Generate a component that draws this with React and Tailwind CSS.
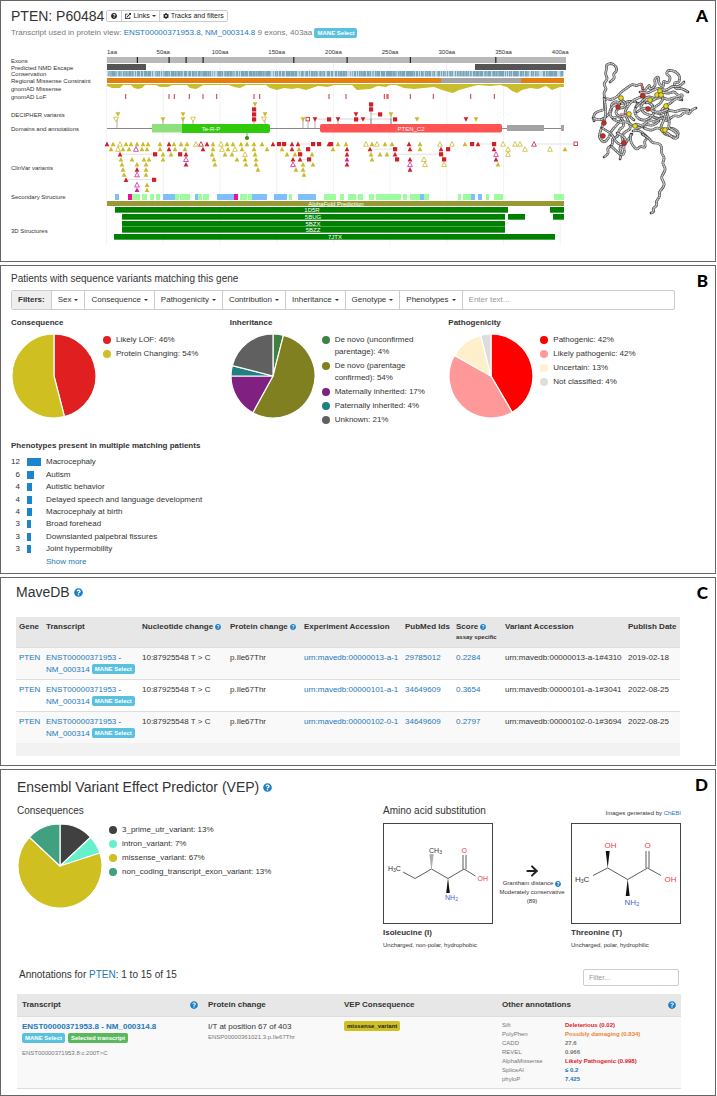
import React from 'react';
import { FaQuestionCircle, FaExternalLinkAlt, FaCog } from 'react-icons/fa';
import { ArrowRight } from 'lucide-react';

const COLORS = {
  y: '#c8bb2c',
  r: '#cf1f2b',
  m: '#cc22aa',
};

/* ---------- data ---------- */

const axis = [50, 100, 150, 200, 250, 300, 350, 400];
const aaX = (aa) => 106.6 + aa * 1.134;

const trackLabels = [
  ['Exons', 63],
  ['Predicted NMD Escape', 70],
  ['Conservation', 76],
  ['Regional Missense Constraint', 83],
  ['gnomAD Missense', 91],
  ['gnomAD LoF', 99],
  ['DECIPHER variants', 117],
  ['Domains and annotations', 131],
  ['ClinVar variants', 170],
  ['Secondary Structure', 199],
  ['3D Structures', 233],
];

const exonEdges = [137.3, 169, 186, 203, 293.7, 347, 410.3, 495.7];
const lof = [125.7, 169, 174.3, 189.3, 203, 216.7, 254, 259.7, 329, 346, 384.3, 387, 388, 410.3, 433.3, 470.7, 494.3];

const missense = [
  [107, 1], [112, 3], [120, 3], [123, 0], [131, 0], [134, 3], [138, 4], [142, 3], [145, 0], [156, 0], [160, 2], [168, 2],
  [172, 0], [187, 0], [190, 3], [196, 4], [200, 2], [203, 0], [229, 0], [234, 2], [240, 3], [246, 0], [266, 0],
  [270, 3], [277, 5], [284, 3], [292, 4], [298, 3], [306, 5], [312, 3], [318, 1], [328, 2], [334, 0], [352, 0],
  [357, 5], [370, 4], [378, 1], [386, 2], [390, 0], [396, 0], [404, 3], [414, 4], [424, 3], [434, 2], [442, 5],
  [449, 7], [453, 8], [459, 5], [470, 2], [478, 0], [490, 1], [500, 0], [507, 2], [512, 6], [517, 8], [522, 5],
  [530, 3], [538, 4], [546, 1], [552, 5], [560, 2], [564, 2],
];

// lower case = filled triangle, upper case = open triangle, s/S = square
const clinvar = [
  'r107 y113 Y120 y126 y131 y137 y143 y148 y160 r169 y174 y181 y187 Y196 R201 r207 y213 Y221 y227 y233 y241 y247 y254 y262 r273 s279 s284 r292 r298 s313 s319 r329 s331 y338 y346 Y366 y372 Y377 y385 y392 r409 y420 Y440 Y452 y465 s472 r478 s494 Y503 Y515 Y520 R534 S576',
  'y111 Y118 y123 y129 M136 y142 y147 y160 r169 y175 y185 r203 y213 Y222 y228 Y235 y242 y254 y267 y282 r292 y299 s308 y333 r347 r370 s395 r410 y420 r441 s448 r494 Y508 Y525 Y550 y565',
  'r120 s155 y163 y171 s180 r186 y212 y225 y232 Y245 y255 y287 y295 s300 y312 r347 y371 y380 y387 r395 s441 M496 Y508',
  'y121 y132 y144 y149 y163 M186 y214 y237 y245 y256 r293 r300 s309 m347 y372 s397 r410 Y424 s444 r496',
  'y122 y137 y146 r186 y215 y246 y256 M293 y303 y313 r347 M410 Y425 Y444 y498',
  'y123 r137 y146 y258 y296 y303 r410',
  'y124 M137 y146 y304',
  'r126 s154',
  'M137 y147',
  'm137 y147',
];
const clinvarLinks = [
  [0, 298, 313], [0, 478, 494], [0, 534, 576], [1, 370, 395],
  [2, 120, 155], [2, 395, 441], [3, 300, 309], [7, 126, 154],
];

const decipher = [
  'y255 s371',
  's254 s371',
  'y118 y183 s254 y265 r356 s380 y391',
  'Y116 y163 y183 Y193 s254 Y264 y303 S308 r315 s329 r338 s356 r363 s395 y417 r466 y476',
];
const stems = [117, 163, 183, 193, 254, 265, 303, 308, 315, 338, 371, 391];

const secondary = {
  '#80bfff': [[115, 119], [163, 175], [195, 198], [217, 234], [252, 267], [274, 287], [298, 316], [420, 424], [471, 475], [478, 482]],
  '#e6149b': [[128, 132], [234, 238]],
  '#9dfba0': [
    [132, 140], [142, 147], [150, 154], [156, 160], [175, 179], [180, 190], [198, 202], [203, 209], [240, 247],
    [248, 252], [289, 292], [324, 336], [340, 344], [348, 356], [358, 363], [369, 374], [376, 401], [403, 407],
    [410, 420], [424, 429], [458, 461], [463, 471], [486, 489], [494, 503], [554, 564],
  ],
};

const structures = [
  { name: '1D5R', y: 207, label: 312, bars: [[115, 508], [550, 564]] },
  { name: '5BUG', y: 214, label: 313, bars: [[122, 505], [508, 525], [553, 564]] },
  { name: '5BZX', y: 221, label: 313, bars: [[122, 505]] },
  { name: '5BZZ', y: 227, label: 313, bars: [[122, 505]] },
  { name: '7JTX', y: 234, label: 335, bars: [[114, 555]] },
];

// backbone of the folded protein, one list of points for each strand
const strands = [
  [[605, 98], [603, 93], [607, 89], [603, 84], [608, 79], [605, 74], [607, 68], [606, 65], [611, 63], [616, 66], [617, 71], [613, 74], [615, 78], [610, 82]],
  [[594, 121], [593, 115], [598, 111], [605, 110], [604, 103], [606, 98], [611, 100], [617, 97], [621, 92], [627, 88], [632, 84], [637, 86], [641, 83], [643, 89]],
  [[593, 118], [599, 121], [606, 117], [612, 111], [611, 104], [616, 101], [622, 104], [629, 101], [636, 102]],
  [[604, 98], [607, 112], [603, 124], [600, 132], [599, 138], [604, 143], [609, 138], [611, 131], [616, 126], [621, 120]],
  [[604, 157], [609, 154], [607, 148], [613, 145], [612, 138], [618, 137], [619, 129], [624, 127], [623, 119], [618, 116], [612, 119], [609, 112], [613, 105], [620, 104]],
  [[620, 159], [622, 153], [619, 148], [624, 143], [621, 136], [626, 131], [631, 129], [629, 122], [624, 113], [628, 106], [633, 100], [641, 97]],
  [[611, 146], [616, 151], [622, 156], [625, 152], [623, 146], [628, 140], [632, 134]],
  [[602, 128], [607, 131], [612, 134], [615, 141], [620, 145], [627, 144], [625, 137], [617, 133]],
  [[613, 119], [619, 123], [626, 121], [633, 126], [640, 128], [646, 124], [653, 126], [659, 121]],
  [[638, 103], [634, 109], [636, 117], [643, 121], [651, 118], [655, 111], [652, 104], [645, 101], [640, 106], [643, 113], [650, 115], [657, 119], [664, 117]],
  [[641, 96], [646, 89], [650, 84], [649, 90], [656, 86], [654, 79], [659, 76], [658, 83], [664, 88], [663, 80], [668, 84], [671, 77], [666, 74], [668, 70], [675, 71], [680, 76], [679, 83], [674, 82], [675, 89], [681, 88], [688, 92]],
  [[640, 92], [647, 94], [653, 90], [659, 88], [666, 91], [672, 86], [679, 87], [684, 82]],
  [[636, 107], [642, 101], [648, 96], [655, 99], [662, 97], [668, 100], [675, 97], [682, 100]],
  [[662, 92], [669, 94], [674, 91], [678, 96], [683, 94], [681, 100], [676, 98], [671, 103], [665, 106], [660, 112], [662, 119], [668, 121]],
  [[696, 108], [691, 110], [690, 114], [684, 112], [680, 117], [674, 115], [669, 120], [662, 117], [656, 122], [648, 120], [643, 126], [636, 124]],
  [[689, 110], [682, 109], [676, 112], [669, 110], [663, 113], [656, 114], [650, 108], [643, 108], [637, 112]],
  [[667, 108], [664, 121], [660, 127], [664, 134], [671, 136], [677, 138], [679, 132], [673, 128], [666, 129]],
  [[667, 113], [670, 121], [668, 128], [675, 131], [679, 137], [674, 139], [669, 134], [663, 131], [657, 127], [652, 131], [644, 128]],
  [[631, 134], [630, 140], [633, 146], [637, 150], [640, 146], [646, 148], [644, 141], [648, 138], [643, 133], [638, 130], [633, 131]],
  [[646, 103], [654, 101], [658, 95], [664, 97], [661, 103], [655, 107], [649, 110], [659, 113], [668, 109]],
  [[620, 99], [627, 103], [624, 108], [618, 108], [615, 113], [620, 117], [628, 115], [634, 120]],
  [[642, 134], [649, 138], [652, 143], [659, 143], [662, 147], [661, 153], [665, 158], [662, 163], [666, 169], [663, 174], [661, 178], [665, 184], [662, 189], [659, 192], [660, 197], [656, 201], [657, 206], [653, 208], [654, 212], [651, 213]],
];
const spheres = {
  '#e6dc1e': [[621, 98], [629, 114], [650, 100], [660, 91], [657, 95], [661, 95], [666, 106], [635, 126], [663, 130], [665, 130]],
  '#d8222c': [[643, 96], [618, 107], [648, 109], [604, 123], [603, 136], [624, 143]],
};

const phenotypes = [
  ['Macrocephaly', 12],
  ['Autism', 6],
  ['Autistic behavior', 4],
  ['Delayed speech and language development', 4],
  ['Macrocephaly at birth', 4],
  ['Broad forehead', 3],
  ['Downslanted palpebral fissures', 3],
  ['Joint hypermobility', 3],
];

const patientCharts = [
  {
    title: 'Consequence',
    slices: [
      { label: 'Likely LOF', value: 46, color: '#e02020' },
      { label: 'Protein Changing', value: 54, color: '#cfbf20' },
    ],
  },
  {
    title: 'Inheritance',
    slices: [
      { label: 'De novo (unconfirmed parentage)', value: 4, color: '#408040' },
      { label: 'De novo (parentage confirmed)', value: 54, color: '#808020' },
      { label: 'Maternally inherited', value: 17, color: '#802080' },
      { label: 'Paternally inherited', value: 4, color: '#208080' },
      { label: 'Unknown', value: 21, color: '#606060' },
    ],
  },
  {
    title: 'Pathogenicity',
    slices: [
      { label: 'Pathogenic', value: 42, color: '#ff0000' },
      { label: 'Likely pathogenic', value: 42, color: '#ff9999' },
      { label: 'Uncertain', value: 13, color: '#fff0cc' },
      { label: 'Not classified', value: 4, color: '#dddddd' },
    ],
  },
];

const vepSlices = [
  { label: '3_prime_utr_variant', value: 13, color: '#404040' },
  { label: 'intron_variant', value: 7, color: '#66f0cc' },
  { label: 'missense_variant', value: 67, color: '#cfbf20' },
  { label: 'non_coding_transcript_exon_variant', value: 13, color: '#40a080' },
];

const maveRows = [
  { urn: 'urn:mavedb:00000013-a-1', pubmed: '29785012', score: '0.2284', variant: 'urn:mavedb:00000013-a-1#4310', date: '2019-02-18' },
  { urn: 'urn:mavedb:00000101-a-1', pubmed: '34649609', score: '0.3654', variant: 'urn:mavedb:00000101-a-1#3041', date: '2022-08-25' },
  { urn: 'urn:mavedb:00000102-0-1', pubmed: '34649609', score: '0.2797', variant: 'urn:mavedb:00000102-0-1#3694', date: '2022-08-25' },
];

const annotations = [
  ['Sift', 'Deleterious (0.02)', 'text-[#e0202a]'],
  ['PolyPhen', 'Possibly damaging (0.834)', 'text-[#ee8434]'],
  ['CADD', '27.6', 'text-[#777]'],
  ['REVEL', '0.966', 'text-[#777]'],
  ['AlphaMissense', 'Likely Pathogenic (0.998)', 'text-[#e0202a]'],
  ['SpliceAI', '≤ 0.2', 'text-[#2478b8]'],
  ['phyloP', '7.425', 'text-[#2478b8]'],
];

/* ---------- small pieces ---------- */

function Panel({ letter, className, children }) {
  return (
    <section className={`relative border border-[#666] bg-white ${className}`}>
      <span className="absolute top-1.5 right-[7px] font-[Lato] text-[17px] leading-none font-black text-black">{letter}</span>
      {children}
    </section>
  );
}

function A({ children }) {
  return <a href="#" className="text-[#2478b8]">{children}</a>;
}

function Badge({ className = 'bg-[#5bc0de] text-white', children }) {
  return (
    <span className={`inline-block rounded-xs px-[3px] align-middle text-[6px] leading-[10px] font-bold ${className}`}>
      {children}
    </span>
  );
}

function Help({ className = 'size-[9px]' }) {
  return <FaQuestionCircle className={`inline-block shrink-0 text-[#1a7fc6] ${className}`} />;
}

function Caret() {
  return <span className="border-x-2 border-t-2 border-x-transparent border-t-[#333]" />;
}

function Pie({ slices }) {
  const total = slices.reduce((sum, s) => sum + s.value, 0);
  const point = (t) => {
    const a = (t / total) * 2 * Math.PI;
    return `${43 + 42 * Math.sin(a)} ${43 - 42 * Math.cos(a)}`;
  };
  let start = 0;
  return (
    <svg viewBox="0 0 86 86" className="size-[86px] shrink-0">
      {slices.map((s) => {
        const from = start;
        start += s.value;
        return (
          <path
            key={s.label}
            d={`M43 43L${point(from)}A42 42 0 ${s.value > total / 2 ? 1 : 0} 1 ${point(start)}Z`}
            fill={s.color}
            stroke="#fff"
            strokeWidth="1.2"
          />
        );
      })}
    </svg>
  );
}

function PieWithLegend({ slices }) {
  return (
    <div className="flex gap-1.5">
      <Pie slices={slices} />
      <ul className="flex flex-col gap-0.5 pt-px leading-3">
        {slices.map((s) => (
          <li key={s.label} className="flex gap-[5px]">
            <span className="mt-0.5 size-2 shrink-0 rounded-full" style={{ backgroundColor: s.color }} />
            <span>{`${s.label}: ${s.value}%`}</span>
          </li>
        ))}
      </ul>
    </div>
  );
}

/* ---------- protein tracks ---------- */

function Mark({ code, y, down }) {
  const kind = code[0];
  const x = Number(code.slice(1));
  const open = kind === kind.toUpperCase();
  const color = COLORS[kind.toLowerCase()] || COLORS.r;
  const style = open ? { fill: '#fff', stroke: color, strokeWidth: 0.8 } : { fill: color };
  if (kind === 's' || kind === 'S') {
    return <rect x={x - 2} y={y - 2} width={open ? 3.6 : 4.2} height={open ? 3.6 : 4.2} {...style} />;
  }
  return down
    ? <path d={`M${x - 2.4} ${y - 2.1}h4.8l-2.4 4.6z`} {...style} />
    : <path d={`M${x - 2.4} ${y + 2.2}h4.8l-2.4 -4.6z`} {...style} />;
}

function Conservation() {
  const bars = [];
  let seed = 7;
  for (let x = 107; x < 564; x += 1) {
    seed = (seed * 1103 + 377) % 9973;
    const level = seed % 10;
    bars.push(
      <rect key={x} x={x} y="71" width="1" height="5.5" fill={level > 7 ? '#c4d9e3' : level > 4 ? '#91b7c9' : '#76a5bc'} />
    );
  }
  return <g>{bars}</g>;
}

function ProteinTracks() {
  const area = `M107 84L${missense.map(([x, d]) => `${x} ${85 + d}`).join('L')}L564 84Z`;
  return (
    <svg viewBox="1 38 583 223" className="block w-full text-[6px]">
      <g stroke="#eee" strokeWidth="0.7">
        {[0, ...axis].map((aa) => <path key={aa} d={`M${aaX(aa)} 56V245`} />)}
      </g>
      <g fill="#333">
        {trackLabels.map(([label, y]) => <text key={label} x="11" y={y}>{label}</text>)}
        <text x="107" y="54">1aa</text>
        {axis.map((aa) => <text key={aa} x={aaX(aa)} y="54" textAnchor="middle">{`${aa}aa`}</text>)}
      </g>

      <rect x="107" y="57" width="459" height="6" fill="#b9b9b9" />
      {exonEdges.map((x) => <rect key={x} x={x - 0.5} y="57" width="1.2" height="6" fill="#222" />)}
      <rect x="107" y="64" width="39" height="6" fill="#555" />
      <rect x="475" y="64" width="91" height="6" fill="#555" />
      <Conservation />
      <rect x="107" y="78" width="457" height="5" fill="#e67e0e" />
      <rect x="441" y="78" width="80" height="5" fill="#a3a3a3" />
      <path d={area} fill="#c9bd2e" />
      {lof.map((x) => <rect key={x} x={x - 0.5} y="94" width="1" height="5" fill="#cf3038" />)}

      <g stroke="#777" strokeWidth="0.6">
        <path d="M315 119H329M338 119H356M356 119H395M371 114H380" stroke="#bbb" />
        {stems.map((x) => <path key={x} d={`M${x} 119V128`} />)}
        <path d="M371 106V125M391 115V125" />
      </g>
      {decipher.map((row, i) => row.split(' ').map((code) => <Mark key={code} code={code} y={104.3 + i * 5} down />))}

      <path d="M107 128.5H564" stroke="#888" />
      <rect x="152" y="124" width="31" height="8.5" fill="#8fe07a" />
      <path d="M182 124h86q2 0 2 2v5q0 2 -2 2h-86z" fill="#2fcb0a" />
      <rect x="320" y="124" width="182" height="8.5" rx="2" fill="#ff5353" />
      <rect x="507" y="125" width="37" height="6" fill="#a3a3a3" />
      <rect x="561" y="125" width="3" height="6" fill="#a3a3a3" />
      <g fill="#fff" textAnchor="middle">
        <text x="211" y="130.5">Te-R-P</text>
        <text x="411" y="130.5">PTEN_C2</text>
      </g>
      <path d="M247 133V137" stroke="#3b8f1c" strokeWidth="0.7" />
      <circle cx="247" cy="138" r="2.1" fill="#3b8f1c" />

      {clinvarLinks.map(([row, a, b]) => (
        <path key={`${row}-${a}`} d={`M${a} ${144 + row * 5.1}H${b}`} stroke="#ccc" strokeWidth="0.6" />
      ))}
      {clinvar.map((row, i) => row.split(' ').map((code) => <Mark key={i + code} code={code} y={144 + i * 5.1} />))}

      {Object.entries(secondary).map(([color, segments]) =>
        segments.map(([a, b]) => <rect key={a} x={a} y="194" width={b - a} height="6" fill={color} />)
      )}
      <rect x="107" y="201" width="457" height="5" fill="#999933" />
      {structures.map((s) => s.bars.map(([a, b]) => (
        <rect key={s.name + a} x={a} y={s.y} width={b - a} height="5.7" fill="#008000" />
      )))}
      <g fill="#fff" textAnchor="middle">
        <text x="336" y="205.8">AlphaFold Prediction</text>
        {structures.map((s) => <text key={s.name} x={s.label} y={s.y + 5}>{s.name}</text>)}
      </g>
    </svg>
  );
}

function smooth(points) {
  let d = `M${points[0].join(' ')}`;
  for (let i = 1; i < points.length - 1; i += 1) {
    const [x, y] = points[i];
    const [nx, ny] = points[i + 1];
    d += `Q${x} ${y} ${(x + nx) / 2} ${(y + ny) / 2}`;
  }
  return `${d}L${points[points.length - 1].join(' ')}`;
}

function ProteinModel() {
  return (
    <svg viewBox="584 38 131 223" className="block w-full" fill="none" strokeLinejoin="round">
      {strands.map((points, i) => (
        <g key={i}>
          <path d={smooth(points)} stroke="#3a3a3a" strokeWidth="2.6" strokeLinecap="round" />
          <path d={smooth(points)} stroke="#d2d2d2" strokeWidth="1.4" />
          <path d={smooth(points)} stroke="#777" strokeWidth="1.4" strokeDasharray="0.6 1.8" />
        </g>
      ))}
      <path d="M642 83V92M620 114H627" stroke="#c8323a" strokeWidth="1" />
      {Object.entries(spheres).map(([color, list]) =>
        list.map(([x, y]) => <circle key={`${x}-${y}`} cx={x} cy={y} r="2.4" fill={color} stroke="#4a3a10" strokeWidth="0.6" />)
      )}
    </svg>
  );
}

/* ---------- molecules ---------- */

function Isoleucine() {
  return (
    <svg viewBox="384 824 108 99" className="block w-full text-[7px]">
      <g stroke="#333" strokeWidth="0.8" fill="none">
        <path d="M403 872L415 878.5L431.5 869L448 878.5L464 869L475.5 876" />
        <path d="M463 869V855M466 869V855" />
        <path d="M429.5 855h4M429.7 857h3.6M430 859h3M430.2 861h2.6M430.5 863h2M430.7 865h1.6M431 867h1" />
      </g>
      <path d="M448 878L446.2 893H449.8Z" fill="#111" />
      <g fill="#333">
        <text x="429" y="853">CH<tspan fontSize="5" dy="1">3</tspan></text>
        <text x="388" y="871">H<tspan fontSize="5" dy="1">3</tspan><tspan dy="-1">C</tspan></text>
      </g>
      <g fill="#e8404a">
        <text x="461.5" y="853">O</text>
        <text x="477.5" y="881">OH</text>
      </g>
      <text x="445" y="900" fill="#4a5fd8">NH<tspan fontSize="5" dy="1">2</tspan></text>
    </svg>
  );
}

function Threonine() {
  return (
    <svg viewBox="573 824 108 99" className="block w-full text-[8px]">
      <g stroke="#333" strokeWidth="0.8" fill="none">
        <path d="M594 875.5L608.7 868L628.7 879.5L648.5 868L662 875.5" />
        <path d="M647 868V851M650 868V851" />
      </g>
      <path d="M608.7 868L606.7 851H610.7ZM628.7 879L626.7 896H630.7Z" fill="#111" />
      <text x="576" y="882" fill="#333">H<tspan fontSize="5" dy="1">3</tspan><tspan dy="-1">C</tspan></text>
      <g fill="#e8404a">
        <text x="605.5" y="848">OH</text>
        <text x="645.5" y="848">O</text>
        <text x="665.5" y="882">OH</text>
      </g>
      <text x="625.5" y="905" fill="#4a5fd8">NH<tspan fontSize="6" dy="1">2</tspan></text>
    </svg>
  );
}

function AminoAcid({ name, note, children }) {
  return (
    <figure className="w-[110px]">
      <div className="border border-[#444]">{children}</div>
      <figcaption className="pt-[3px]">
        <b className="block leading-3">{name}</b>
        <span className="mt-0.5 block text-[6px] leading-2 whitespace-nowrap">{note}</span>
      </figcaption>
    </figure>
  );
}

/* ---------- panels ---------- */

function ProteinPanel() {
  return (
    <Panel letter="A" className="pt-2">
      <div className="flex items-center gap-0.5 pl-2.5">
        <h1 className="text-sm leading-[14px]">PTEN: P60484</h1>
        <div className="flex h-3 divide-x divide-[#ccc] rounded-xs border border-[#ccc] text-[7px] leading-[10px] text-[#222]">
          <button type="button" aria-label="Help" className="px-1"><FaQuestionCircle className="size-1.5" /></button>
          <button type="button" className="flex items-center gap-0.5 px-[3px]">
            <FaExternalLinkAlt className="size-1.5" />Links<Caret />
          </button>
          <button type="button" className="flex items-center gap-0.5 px-[3px]">
            <FaCog className="size-1.5" />Tracks and filters
          </button>
        </div>
      </div>
      <p className="mt-[5px] pl-2.5 leading-[10px] text-[#777]">
        Transcript used in protein view: <A>ENST00000371953.8, NM_000314.8</A> 9 exons, 403aa{' '}
        <span className="inline-flex align-top"><Badge>MANE Select</Badge></span>
      </p>
      <div className="grid grid-cols-[583fr_131fr]">
        <ProteinTracks />
        <ProteinModel />
      </div>
    </Panel>
  );
}

const filters = ['Sex', 'Consequence', 'Pathogenicity', 'Contribution', 'Inheritance', 'Genotype', 'Phenotypes'];

function PatientsPanel() {
  return (
    <Panel letter="B" className="pt-[7px] pr-10 pb-[5px] pl-2.5">
      <h2 className="text-[10px] leading-3">Patients with sequence variants matching this gene</h2>
      <div className="mt-[5px] flex h-5 divide-x divide-[#ccc] rounded-xs border border-[#ccc]">
        <b className="bg-[#eee] px-1.5 leading-[18px]">Filters:</b>
        {filters.map((f) => (
          <button key={f} type="button" className="flex items-center gap-[3px] px-1.5">{f}<Caret /></button>
        ))}
        <input aria-label="Filter text" placeholder="Enter text..." className="min-w-0 flex-1 px-1.5 placeholder:text-[#999]" />
      </div>

      <div className="mt-[7px] grid grid-cols-3 pr-2">
        {patientCharts.map((c) => (
          <div key={c.title} className="pr-3">
            <h3 className="mb-1 leading-3 font-bold">{c.title}</h3>
            <PieWithLegend slices={c.slices} />
          </div>
        ))}
      </div>

      <h3 className="mt-3.5 leading-3 font-bold">Phenotypes present in multiple matching patients</h3>
      <ul className="mt-1 grid h-[112px] auto-rows-fr">
        {phenotypes.map(([name, count]) => (
          <li key={name} className="flex items-center">
            <span className="w-[9px] text-right">{count}</span>
            <span className="ml-[7px] w-[19px]">
              <span className="block h-2 bg-[#1a85cc]" style={{ width: count * 1.2 }} />
            </span>
            {name}
          </li>
        ))}
        <li className="flex items-center pl-[35px]"><A>Show more</A></li>
      </ul>
    </Panel>
  );
}

function MavePanel() {
  return (
    <Panel letter="C" className="pt-1.5 pr-[35px] pb-[9px] pl-[15px]">
      <h2 className="flex items-center gap-1 text-sm leading-4">MaveDB <Help /></h2>
      <table className="mt-[17px] w-full table-fixed text-left whitespace-nowrap">
        <colgroup>
          <col className="w-[27px]" />
          <col className="w-[96px]" />
          <col className="w-[88px]" />
          <col className="w-[74px]" />
          <col className="w-[101px]" />
          <col className="w-[51px]" />
          <col className="w-[49px]" />
          <col className="w-[123px]" />
          <col className="w-[55px]" />
        </colgroup>
        <thead className="bg-[#e7e7e7]">
          <tr className="h-[30px] align-top leading-3 *:px-[3px] *:pt-1">
            <th>Gene</th>
            <th>Transcript</th>
            <th>Nucleotide change <Help className="size-1.5" /></th>
            <th>Protein change <Help className="size-1.5" /></th>
            <th>Experiment Accession</th>
            <th>PubMed Ids</th>
            <th>
              Score <Help className="size-1.5" />
              <small className="block text-[6px] leading-2">assay specific</small>
            </th>
            <th>Variant Accession</th>
            <th>Publish Date</th>
          </tr>
        </thead>
        <tbody>
          {maveRows.map((r) => (
            <tr key={r.urn} className="h-8 border-t border-[#ddd] align-top leading-3 odd:bg-[#f9f9f9] *:px-[3px] *:pt-1">
              <td><A>PTEN</A></td>
              <td>
                <A>ENST00000371953</A> -<br />
                <A>NM_000314</A> <Badge>MANE Select</Badge>
              </td>
              <td>10:87925548 T &gt; C</td>
              <td>p.Ile67Thr</td>
              <td><A>{r.urn}</A></td>
              <td><A>{r.pubmed}</A></td>
              <td><A>{r.score}</A></td>
              <td>{r.variant}</td>
              <td>{r.date}</td>
            </tr>
          ))}
        </tbody>
        <tfoot>
          <tr className="h-[13px] bg-[#f2f2f2]"><td colSpan={9} /></tr>
        </tfoot>
      </table>
    </Panel>
  );
}

function VepPanel() {
  return (
    <Panel letter="D" className="pt-[9px] pr-[34px] pb-1.5 pl-4">
      <h2 className="flex items-center gap-1 text-sm leading-4">Ensembl Variant Effect Predictor (VEP) <Help /></h2>

      <div className="mt-2.5 grid grid-cols-[366fr_298fr]">
        <div>
          <h3 className="mb-1.5 text-[10px] leading-3">Consequences</h3>
          <PieWithLegend slices={vepSlices} />
        </div>
        <div>
          <div className="mb-1.5 flex items-end justify-between leading-3">
            <h3 className="text-[10px]">Amino acid substitution</h3>
            <span className="text-[6px] leading-2">Images generated by <A>ChEBI</A></span>
          </div>
          <div className="flex justify-between">
            <AminoAcid name="Isoleucine (I)" note="Uncharged, non-polar, hydrophobic"><Isoleucine /></AminoAcid>
            <div className="flex flex-col items-center pt-10 text-center text-[6px] leading-[9px] whitespace-nowrap">
              <ArrowRight className="size-4 text-[#222]" strokeWidth={3} />
              <span className="flex items-center gap-0.5">Grantham distance <Help className="size-1.5" /></span>
              <span>Moderately conservative</span>
              <span>(89)</span>
            </div>
            <AminoAcid name="Threonine (T)" note="Uncharged, polar, hydrophilic"><Threonine /></AminoAcid>
          </div>
        </div>
      </div>

      <div className="mt-5 flex items-start justify-between px-0.5">
        <h3 className="text-[10px] leading-3">Annotations for <A>PTEN</A>: 1 to 15 of 15</h3>
        <input
          aria-label="Filter annotations"
          placeholder="Filter..."
          className="h-[17px] w-24 rounded-xs border border-[#ccc] px-[5px] text-[7px] placeholder:text-[#999]"
        />
      </div>

      <table className="mt-2 w-full table-fixed text-left">
        <colgroup>
          <col className="w-[186px]" />
          <col className="w-[136px]" />
          <col className="w-[158px]" />
          <col className="w-[184px]" />
        </colgroup>
        <thead className="bg-[#e7e7e7]">
          <tr className="h-[22px] *:px-[5px]">
            <th><span className="flex items-center justify-between">Transcript <Help className="size-2" /></span></th>
            <th>Protein change</th>
            <th>VEP Consequence</th>
            <th><span className="flex items-center justify-between">Other annotations <Help className="size-2" /></span></th>
          </tr>
        </thead>
        <tbody>
          <tr className="border-y border-[#ddd] bg-[#f9f9f9] align-top leading-3 *:px-[5px] *:pt-1">
            <td>
              <b><A>ENST00000371953.8 - NM_000314.8</A></b>
              <div className="flex gap-[3px]">
                <Badge>MANE Select</Badge>
                <Badge className="bg-[#5cb85c] text-white">Selected transcript</Badge>
              </div>
              <div className="mt-1 text-[6px] text-[#777]">ENST00000371953.8:c.200T&gt;C</div>
            </td>
            <td>
              I/T at position 67 of 403
              <div className="text-[6px] leading-2 text-[#777]">ENSP00000361021.3:p.Ile67Thr</div>
            </td>
            <td><span className="flex"><Badge className="bg-[#cfc026] text-[#222]">missense_variant</Badge></span></td>
            <td>
              <dl className="grid grid-cols-[63px_1fr] pb-1 text-[6px] leading-[9px] text-[#777]">
                {annotations.map(([name, value, color]) => (
                  <React.Fragment key={name}>
                    <dt>{name}</dt>
                    <dd className={`font-bold ${color}`}>{value}</dd>
                  </React.Fragment>
                ))}
              </dl>
            </td>
          </tr>
        </tbody>
      </table>
    </Panel>
  );
}

export default function App() {
  return (
    <main className="flex flex-col gap-[3px] bg-white pr-px font-['Liberation_Sans',Arial,sans-serif] text-[8px] text-[#333]">
      <ProteinPanel />
      <PatientsPanel />
      <MavePanel />
      <VepPanel />
    </main>
  );
}
